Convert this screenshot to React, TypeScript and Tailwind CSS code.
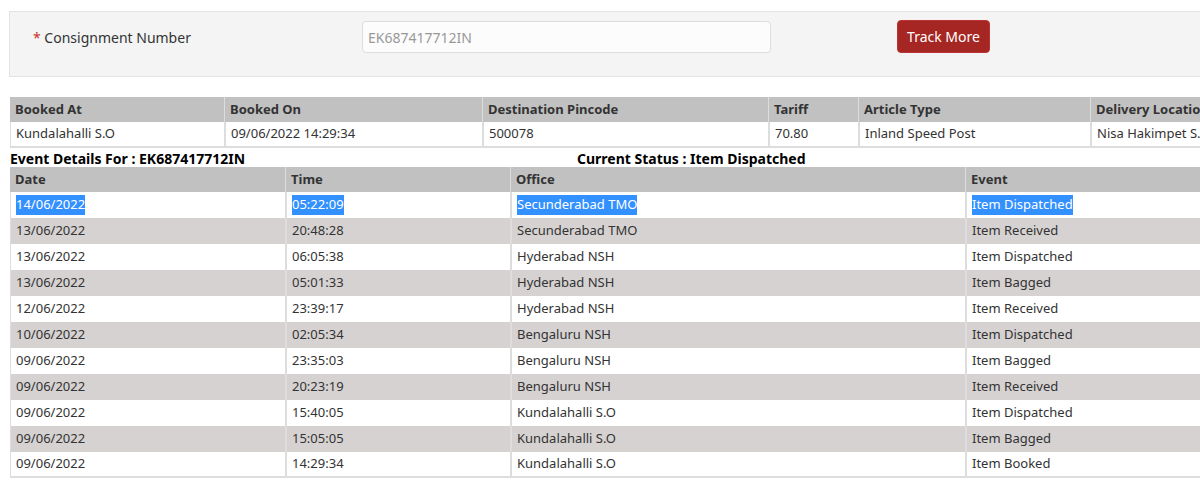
const booking = {
  cols: [
    ["Booked At", "w-[214px]"],
    ["Booked On", "w-[258px]"],
    ["Destination Pincode", "w-[286px]"],
    ["Tariff", "w-[90px]"],
    ["Article Type", "w-[232px]"],
    ["Delivery Location", "w-[150px]"],
  ],
  row: ["Kundalahalli S.O", "09/06/2022 14:29:34", "500078", "70.80", "Inland Speed Post", "Nisa Hakimpet S.O"],
};

const eventCols = [
  ["Date", "w-[275px]"],
  ["Time", "w-[225px]"],
  ["Office", "w-[455px]"],
  ["Event", "w-[245px]"],
];

const events = [
  ["14/06/2022", "05:22:09", "Secunderabad TMO", "Item Dispatched"],
  ["13/06/2022", "20:48:28", "Secunderabad TMO", "Item Received"],
  ["13/06/2022", "06:05:38", "Hyderabad NSH", "Item Dispatched"],
  ["13/06/2022", "05:01:33", "Hyderabad NSH", "Item Bagged"],
  ["12/06/2022", "23:39:17", "Hyderabad NSH", "Item Received"],
  ["10/06/2022", "02:05:34", "Bengaluru NSH", "Item Dispatched"],
  ["09/06/2022", "23:35:03", "Bengaluru NSH", "Item Bagged"],
  ["09/06/2022", "20:23:19", "Bengaluru NSH", "Item Received"],
  ["09/06/2022", "15:40:05", "Kundalahalli S.O", "Item Dispatched"],
  ["09/06/2022", "15:05:05", "Kundalahalli S.O", "Item Bagged"],
  ["09/06/2022", "14:29:34", "Kundalahalli S.O", "Item Booked"],
];

export default function App() {
  return (
    <div className="h-[503px] w-[1200px] overflow-hidden bg-white font-['Liberation_Sans'] text-[13px] text-[#333]">
      {/* search panel */}
      <div className="ml-[9px] mt-[11px] flex h-[66px] w-[1210px] items-start border border-[#e3e3e3] bg-[#f4f4f4]">
        <div className="ml-[23px] mt-[15px] w-[329px] text-[14px] text-[#333]">
          <span className="text-[#c9302c]">*</span> Consignment Number
        </div>
        <div className="mt-[9px] flex h-[32px] w-[409px] items-center rounded border border-[#ddd] bg-[#fcfcfc] px-[5px] text-[14px] text-[#999]">
          EK687417712IN
        </div>
        <button className="ml-[126px] mt-[8px] h-[33px] w-[93px] rounded border border-[#b33] bg-[#a52622] text-[14px] text-white">
          Track More
        </button>
      </div>

      {/* booking table */}
      <div className="ml-[10px] mt-[20px] w-[1230px]">
        <div className="flex h-[25px] bg-[#c1c1c1] font-bold">
          {booking.cols.map(([c, w], i) => (
            <div key={c} className={`${w} flex shrink-0 items-center px-[5px] ${i ? "border-l border-[#ddd]" : ""}`}>
              {c}
            </div>
          ))}
        </div>
        <div className="flex h-[26px] border-b-2 border-[#ddd] bg-white">
          {booking.row.map((v, i) => (
            <div key={i} className={`${booking.cols[i][1]} flex shrink-0 items-center px-[5px] border-[#ddd] ${i ? "border-l-2" : "border-l"}`}>
              {v}
            </div>
          ))}
        </div>
      </div>

      <div className="ml-[10px] mt-[1px] flex h-[18px] items-center text-[14px] font-bold text-black">
        <span className="w-[567px]">Event Details For : EK687417712IN</span>
        <span>Current Status : Item Dispatched</span>
      </div>

      {/* events table */}
      <div className="ml-[10px] w-[1200px]">
        <div className="flex h-[25px] bg-[#c1c1c1] font-bold">
          {eventCols.map(([c, w], i) => (
            <div key={c} className={`${w} flex shrink-0 items-center px-[5px] ${i ? "border-l border-[#ddd]" : ""}`}>
              {c}
            </div>
          ))}
        </div>
        {events.map((r, ri) => (
          <div
            key={ri}
            className={`flex h-[26px] ${ri % 2 ? "bg-[#d6d2d2]" : "bg-white"} ${ri === events.length - 1 ? "border-b-2 border-[#ddd]" : ""}`}
          >
            {r.map((v, i) => (
              <div key={i} className={`${eventCols[i][1]} flex shrink-0 items-center px-[5px] border-[#ddd] ${i ? "border-l-2" : "border-l"}`}>
                {ri === 0 ? <span className="bg-[#3390ff] text-white">{v}</span> : v}
              </div>
            ))}
          </div>
        ))}
      </div>
    </div>
  );
}
